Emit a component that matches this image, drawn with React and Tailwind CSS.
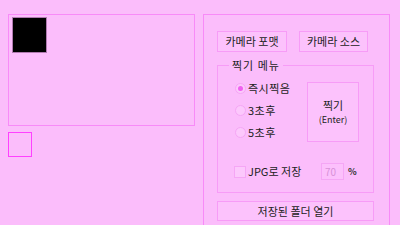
import React from 'react';

const font = { fontFamily: '"Noto Sans CJK KR", "Noto Sans", sans-serif' };

function Radio({ label, checked }) {
  return (
    <div className="flex items-center h-[22px]">
      <span className="w-[11px] h-[11px] rounded-full border border-[#f5a6f5] bg-[#fcc8fc] flex items-center justify-center">
        {checked && <span className="w-[5px] h-[5px] rounded-full bg-[#f060f0]" />}
      </span>
      <span className="ml-[2px] text-[11px] leading-none text-[#222] tracking-[0.5px]">{label}</span>
    </div>
  );
}

function Btn({ children, className }) {
  return (
    <button className={'border border-[#f79cf7] bg-[#fcc2fc] text-[11px] leading-none text-[#222] flex items-center justify-center ' + className}>
      {children}
    </button>
  );
}

export default function App() {
  return (
    <div className="w-[400px] h-[225px] overflow-hidden bg-[#fbbdfb] flex pt-[14px] pl-[8px]" style={font}>
      <div className="w-[187px] flex flex-col">
        <div className="h-[112px] border border-[#f88af8] pl-[3px] pt-[2px]">
          <div className="w-[35px] h-[36px] bg-black border border-[#b07ab0]" />
        </div>
        <div className="mt-[6px] w-[24px] h-[25px] border-[1.5px] border-[#ff40ff]" />
      </div>

      <div className="ml-[8px] w-[187px] h-[230px] border border-[#f88af8] pl-[13px] pt-[16px]">
        <div className="flex gap-[12px]">
          <Btn className="w-[70px] h-[21px]">카메라 포맷</Btn>
          <Btn className="w-[69px] h-[21px]">카메라 소스</Btn>
        </div>

        <div className="relative mt-[13px] w-[157px] h-[128px] border border-[#f79cf7]">
          <span className="absolute -top-[8px] left-[11px] px-[3px] bg-[#fbbdfb] text-[11px] leading-[14px] tracking-[1px] text-[#222]">찍기 메뉴</span>
          <div className="flex pl-[17px] pt-[11px]">
            <div className="flex flex-col w-[72px]">
              <Radio label="즉시찍음" checked />
              <Radio label="3초후" />
              <Radio label="5초후" />
            </div>
            <div className="mt-[5px] w-[52px] h-[60px] border border-[#f79cf7] bg-[#fcc2fc] flex flex-col items-center justify-center text-[#222]">
              <span className="text-[11px] leading-[16px]">찍기</span>
              <span className="text-[9px] leading-[14px]">(Enter)</span>
            </div>
          </div>
          <div className="flex items-center pl-[16px] mt-[20px]">
            <span className="w-[12px] h-[12px] border border-[#f5a6f5] bg-[#fcc8fc]" />
            <span className="ml-[2px] text-[11px] leading-none text-[#222] w-[73px]">JPG로 저장</span>
            <span className="w-[23px] h-[17px] border border-[#f5a6f5] bg-[#fcc0fc] text-[10px] leading-[15px] text-[#d890d8] pl-[3px]">70</span>
            <span className="ml-[4px] text-[9px] leading-none font-bold text-[#333]">%</span>
          </div>
        </div>

        <Btn className="mt-[8px] w-[157px] h-[20px]">저장된 폴더 열기</Btn>
      </div>
    </div>
  );
}
